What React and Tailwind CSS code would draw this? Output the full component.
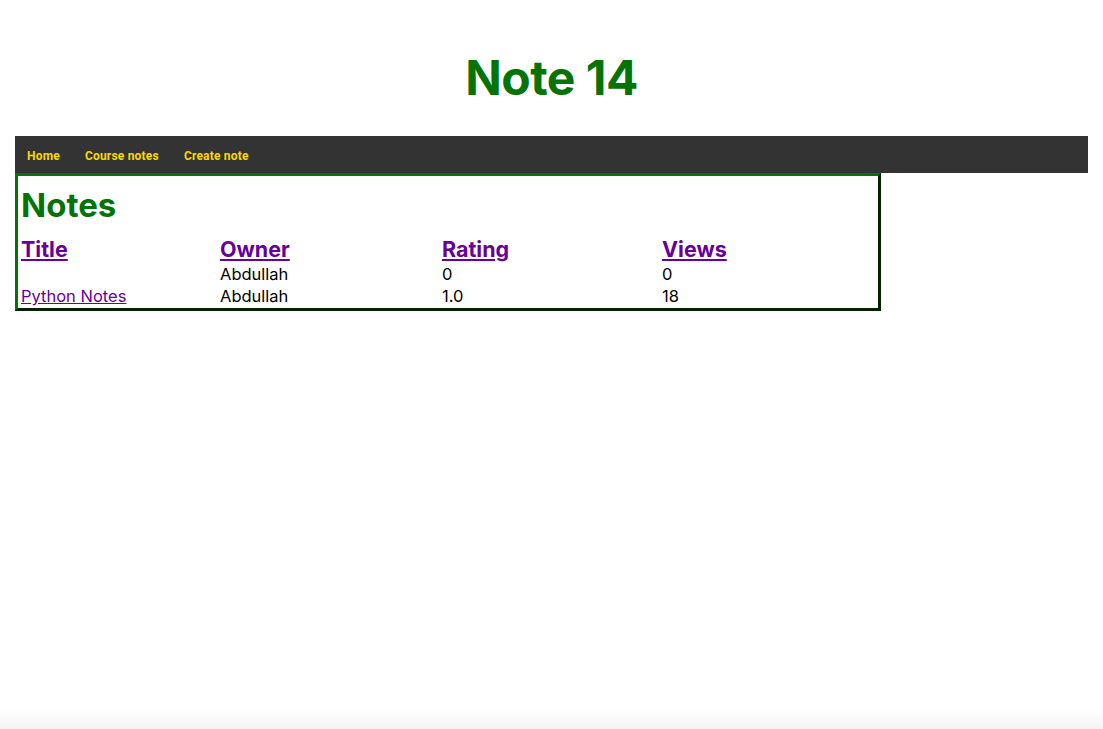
import React from 'react'

const rows = [
  { title: '', owner: 'Abdullah', rating: '0', views: '0' },
  { title: 'Python Notes', owner: 'Abdullah', rating: '1.0', views: '18' },
]

function App() {
  return (
    <div className="min-h-[729px] flex flex-col bg-white font-['Inter','Liberation_Sans',sans-serif] text-black">
      <h1 className="text-center text-[48px] font-bold text-[#057305] tracking-[-0.5px] leading-none pt-[54px] pb-[34px]">
        Note 14
      </h1>

      <nav className="mx-[15px] h-[37px] bg-[#333333] flex items-center gap-[25px] px-[12px] pt-[2px] font-['Roboto','Liberation_Sans',sans-serif] text-[12px] font-bold tracking-[0.2px] text-[#ffd700]">
        <a href="#">Home</a>
        <a href="#">Course notes</a>
        <a href="#">Create note</a>
      </nav>

      <div className="ml-[15px] w-[866px] border-[3px] border-t-[#057305] border-l-[#057305] border-r-[#022202] border-b-[#022202] px-[3px] pb-px">
        <h2 className="text-[33px] font-bold text-[#057305] leading-none pt-[13px] pb-[14px]">Notes</h2>
        <div className="grid grid-cols-[199px_222px_220px_1fr]">
          {['Title', 'Owner', 'Rating', 'Views'].map((h) => (
            <a key={h} href="#" className="text-[21.5px] font-bold text-[#660099] underline leading-[27px] justify-self-start">
              {h}
            </a>
          ))}
          {rows.map((r, i) => (
            <React.Fragment key={i}>
              <div className="text-[16.5px] leading-[22px]">
                {r.title && <a href="#" className="text-[#660099] underline">{r.title}</a>}
              </div>
              <div className="text-[16.5px] leading-[22px]">{r.owner}</div>
              <div className="text-[16.5px] leading-[22px]">{r.rating}</div>
              <div className="text-[16.5px] leading-[22px]">{r.views}</div>
            </React.Fragment>
          ))}
        </div>
      </div>

      <div className="grow" />
      <div className="h-[20px] bg-gradient-to-b from-white to-[#f4f4f4]" />
    </div>
  )
}

export default App
